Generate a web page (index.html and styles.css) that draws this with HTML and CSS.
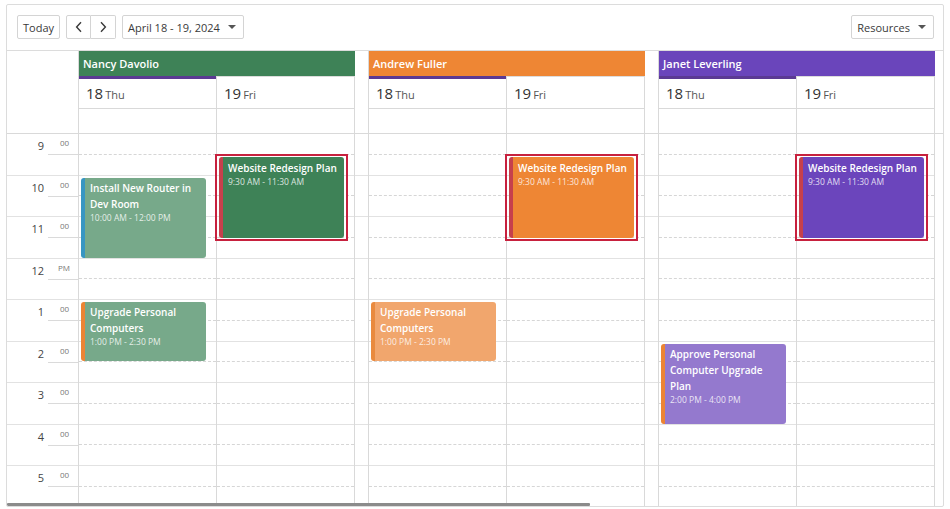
FILE: index.html
```html
<!DOCTYPE html>
<html>
<head>
<meta charset="utf-8">
<link rel="stylesheet" href="styles.css">
</head>
<body>
<div class="scheduler">
  <div class="toolbar">
    <div class="tb-left">
      <button class="btn">Today</button>
      <div class="nav">
        <button class="btn nav-btn"><svg width="8" height="12" viewBox="0 0 8 12"><path d="M6 1.2 L1.6 6 L6 10.8" fill="none" stroke="#3a3a3a" stroke-width="1.4"/></svg></button>
        <button class="btn nav-btn"><svg width="8" height="12" viewBox="0 0 8 12"><path d="M2 1.2 L6.4 6 L2 10.8" fill="none" stroke="#3a3a3a" stroke-width="1.4"/></svg></button>
      </div>
      <button class="btn drop">April 18 - 19, 2024<span class="caret"></span></button>
    </div>
    <button class="btn drop">Resources<span class="caret"></span></button>
  </div>

  <div class="cols header">
    <div class="corner"></div>
    <div class="res res-green">Nancy Davolio</div>
    <div class="spacer"></div>
    <div class="res res-orange">Andrew Fuller</div>
    <div class="spacer"></div>
    <div class="res res-purple">Janet Leverling</div>
    <div class="gutter"></div>

    <div class="date today"><span class="num">18</span><span class="dname">Thu</span></div>
    <div class="date"><span class="num">19</span><span class="dname">Fri</span></div>
    <div class="date today"><span class="num">18</span><span class="dname">Thu</span></div>
    <div class="date"><span class="num">19</span><span class="dname">Fri</span></div>
    <div class="date today"><span class="num">18</span><span class="dname">Thu</span></div>
    <div class="date"><span class="num">19</span><span class="dname">Fri</span></div>

    <div class="allday"></div>
    <div class="allday"></div>
    <div class="allday"></div>
    <div class="allday"></div>
    <div class="allday"></div>
    <div class="allday"></div>
  </div>

  <div class="cols body">
    <div class="tcol">
      <div class="hour"><span class="hnum">9</span><span class="hmin">00</span></div>
      <div class="hour"><span class="hnum">10</span><span class="hmin">00</span></div>
      <div class="hour"><span class="hnum">11</span><span class="hmin">00</span></div>
      <div class="hour"><span class="hnum">12</span><span class="hmin pm">PM</span></div>
      <div class="hour"><span class="hnum">1</span><span class="hmin">00</span></div>
      <div class="hour"><span class="hnum">2</span><span class="hmin">00</span></div>
      <div class="hour"><span class="hnum">3</span><span class="hmin">00</span></div>
      <div class="hour"><span class="hnum">4</span><span class="hmin">00</span></div>
      <div class="hour"><span class="hnum">5</span><span class="hmin">00</span></div>
    </div>

    <!-- Nancy Thu -->
    <div class="day-col">
      <div class="slots"><i></i><i></i><i></i><i></i><i></i><i></i><i></i><i></i><i></i><i></i><i></i><i></i><i></i><i></i><i></i><i></i><i></i><i></i></div>
      <div class="event ev-green-l bd-blue" style="top:43.5px;height:80px">
        <div class="ev-title">Install New Router in Dev Room</div>
        <div class="ev-time">10:00 AM - 12:00 PM</div>
      </div>
      <div class="event ev-green-l bd-orange" style="top:168px;height:59px">
        <div class="ev-title">Upgrade Personal Computers</div>
        <div class="ev-time">1:00 PM - 2:30 PM</div>
      </div>
    </div>
    <!-- Nancy Fri -->
    <div class="day-col">
      <div class="slots"><i></i><i></i><i></i><i></i><i></i><i></i><i></i><i></i><i></i><i></i><i></i><i></i><i></i><i></i><i></i><i></i><i></i><i></i></div>
      <div class="event sel ev-green bd-red" style="top:22.5px;height:81px">
        <div class="ev-title">Website Redesign Plan</div>
        <div class="ev-time">9:30 AM - 11:30 AM</div>
      </div>
    </div>
    <div class="sp-col"><b></b><b></b><b></b><b></b><b></b><b></b><b></b><b></b><b></b></div>

    <!-- Andrew Thu -->
    <div class="day-col">
      <div class="slots"><i></i><i></i><i></i><i></i><i></i><i></i><i></i><i></i><i></i><i></i><i></i><i></i><i></i><i></i><i></i><i></i><i></i><i></i></div>
      <div class="event ev-orange-l bd-orange2" style="top:168px;height:59px">
        <div class="ev-title">Upgrade Personal Computers</div>
        <div class="ev-time">1:00 PM - 2:30 PM</div>
      </div>
    </div>
    <!-- Andrew Fri -->
    <div class="day-col">
      <div class="slots"><i></i><i></i><i></i><i></i><i></i><i></i><i></i><i></i><i></i><i></i><i></i><i></i><i></i><i></i><i></i><i></i><i></i><i></i></div>
      <div class="event sel ev-orange bd-red" style="top:22.5px;height:81px">
        <div class="ev-title">Website Redesign Plan</div>
        <div class="ev-time">9:30 AM - 11:30 AM</div>
      </div>
    </div>
    <div class="sp-col"><b></b><b></b><b></b><b></b><b></b><b></b><b></b><b></b><b></b></div>

    <!-- Janet Thu -->
    <div class="day-col">
      <div class="slots"><i></i><i></i><i></i><i></i><i></i><i></i><i></i><i></i><i></i><i></i><i></i><i></i><i></i><i></i><i></i><i></i><i></i><i></i></div>
      <div class="event ev-purple-l bd-orange" style="top:209.5px;height:80px">
        <div class="ev-title">Approve Personal Computer Upgrade Plan</div>
        <div class="ev-time">2:00 PM - 4:00 PM</div>
      </div>
    </div>
    <!-- Janet Fri -->
    <div class="day-col">
      <div class="slots"><i></i><i></i><i></i><i></i><i></i><i></i><i></i><i></i><i></i><i></i><i></i><i></i><i></i><i></i><i></i><i></i><i></i><i></i></div>
      <div class="event sel ev-purple bd-red" style="top:22.5px;height:81px">
        <div class="ev-title">Website Redesign Plan</div>
        <div class="ev-time">9:30 AM - 11:30 AM</div>
      </div>
    </div>
    <div class="gutter-col"></div>
  </div>

  <div class="hscroll"></div>
</div>
</body>
</html>
```

FILE: styles.css
```css
* { box-sizing: border-box; margin: 0; padding: 0; }
html, body { background: #fff; }
body {
  font-family: "Open Sans", "Noto Sans", "Liberation Sans", sans-serif;
  color: #333;
  width: 950px;
  height: 509px;
  overflow: hidden;
}

.scheduler {
  position: relative;
  margin: 4px 0 0 6px;
  width: 938px;
  height: 503px;
  border: 1px solid #dcdcdc;
  border-radius: 2px;
  overflow: hidden;
}

/* toolbar */
.toolbar {
  height: 46px;
  border-bottom: 1px solid #dcdcdc;
  display: flex;
  justify-content: space-between;
  align-items: flex-start;
  padding: 10px 9px 0 10px;
}
.tb-left { display: flex; gap: 6px; }
.btn {
  height: 24px;
  border: 1px solid #d4d4d4;
  border-radius: 2px;
  background: #fff;
  font-family: inherit;
  font-size: 11px;
  color: #3a3a3a;
  display: flex;
  align-items: center;
  padding: 0 5px;
}
.nav { display: flex; }
.nav-btn { width: 25px; justify-content: center; padding: 0; }
.nav-btn:first-child { border-radius: 2px 0 0 2px; }
.nav-btn:last-child { border-left: none; border-radius: 0 2px 2px 0; }
.drop { padding: 0 7px 0 5px; }
.caret {
  width: 0; height: 0;
  border-left: 4px solid transparent;
  border-right: 4px solid transparent;
  border-top: 4px solid #555;
  margin-left: 8px;
}

/* grid columns */
.cols {
  display: grid;
  grid-template-columns: 72px 138px 138px 14px 138px 138px 14px 138px 138px 8px;
}

/* header */
.header { grid-template-rows: 25px 33px 25px; }
.corner, .spacer {
  grid-row: span 3;
  border-right: 1px solid #d9d9d9;
  border-bottom: 1px solid #d9d9d9;
}
.gutter { grid-row: span 3; border-bottom: 1px solid #d9d9d9; }
.res {
  grid-column: span 2;
  color: #fff;
  font-size: 11px;
  font-weight: 600;
  line-height: 25px;
  padding-left: 4px;
}
.res-green { background: #3e8257; }
.res-orange { background: #ee8634; }
.res-purple { background: #6a45bb; }

.date {
  position: relative;
  border-top: 1px solid #dcdcdc;
  border-right: 1px solid #d9d9d9;
  border-bottom: 1px solid #d9d9d9;
  padding: 6px 0 0 7px;
  line-height: 20px;
  white-space: nowrap;
}
.date.today::before {
  content: "";
  position: absolute;
  left: 0; right: 0; top: -1px;
  height: 3px;
  background: #5b3a93;
}
.num { font-size: 15px; color: #333; }
.dname { font-size: 11px; color: #555; margin-left: 2px; }
.allday {
  border-right: 1px solid #d9d9d9;
  border-bottom: 1px solid #d9d9d9;
}

/* body */
.body { height: 372px; overflow: hidden; }
.tcol { border-right: 1px solid #d9d9d9; }
.hour {
  position: relative;
  height: 41.5px;
  border-bottom: 1px solid #e2e2e2;
  display: flex;
  align-items: flex-start;
  padding-top: 5px;
}
.hour::after {
  content: "";
  position: absolute;
  left: 41px; right: 0; top: 20px;
  border-top: 1px solid #dadada;
}
.hnum {
  width: 37px;
  text-align: right;
  font-size: 11px;
  line-height: 14px;
  color: #444;
}
.hmin {
  margin-left: 16px;
  font-size: 8px;
  line-height: 10px;
  color: #777;
  margin-top: -1px;
}
.hmin.pm { margin-left: 14px; }

.day-col { position: relative; border-right: 1px solid #d9d9d9; }
.slots i { display: block; height: 20.75px; border-bottom: 1px dashed #d6d6d6; }
.slots i:nth-child(even) { border-bottom: 1px solid #e2e2e2; }
.sp-col { border-right: 1px solid #d9d9d9; }
.sp-col b { display: block; height: 41.5px; border-bottom: 1px solid #e2e2e2; }

/* events */
.event {
  position: absolute;
  left: 2px;
  right: 10px;
  border-radius: 3px;
  border-left: 4px solid;
  padding: 2px 6px 0 5px;
  color: #fff;
}
.event.sel { padding-top: 3px; }
.event.sel::after {
  content: "";
  position: absolute;
  left: -8px;
  right: -4px;
  top: -3px;
  bottom: -3px;
  border: 2px solid #c7213e;
  pointer-events: none;
}
.ev-title { font-size: 10px; font-weight: 600; line-height: 16px; }
.ev-time { font-size: 8.5px; line-height: 12px; color: rgba(255,255,255,0.82); }

.ev-green { background: #3e8257; }
.ev-orange { background: #ee8634; }
.ev-purple { background: #6b45bc; }
.ev-green-l { background: #77a98a; }
.ev-orange-l { background: #f1a66d; }
.ev-purple-l { background: #9479ce; }

.bd-red { border-left-color: #c6404c; }
.bd-blue { border-left-color: #3896c2; }
.bd-orange { border-left-color: #ec8434; }
.bd-orange2 { border-left-color: #e98a3e; }

.hscroll {
  position: absolute;
  left: 0;
  bottom: 0;
  width: 583px;
  height: 3px;
  background: #8b8b8b;
  border-radius: 1px;
}
```
